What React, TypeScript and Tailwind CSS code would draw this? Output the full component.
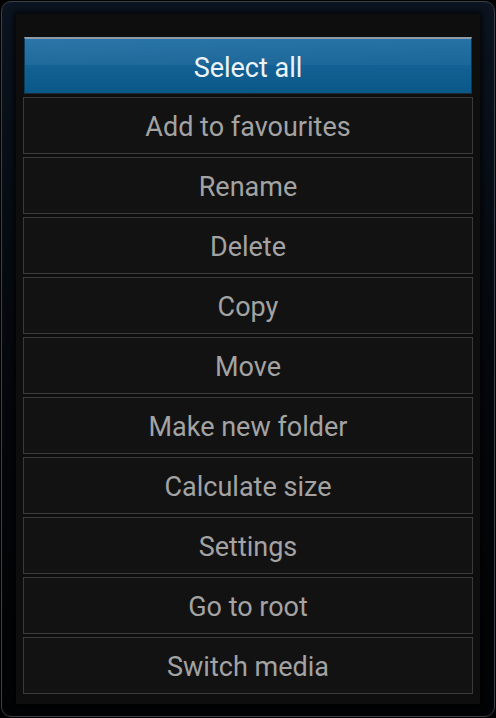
const items = [
  "Select all",
  "Add to favourites",
  "Rename",
  "Delete",
  "Copy",
  "Move",
  "Make new folder",
  "Calculate size",
  "Settings",
  "Go to root",
  "Switch media",
];

export default function App() {
  return (
    <div
      className="w-[496px] h-[718px] bg-black p-px"
      style={{ fontFamily: "Roboto, 'Liberation Sans', sans-serif" }}
    >
      {/* outer frame */}
      <div className="h-full rounded-[10px] border border-[#3a4048] bg-gradient-to-b from-[#0b1420] via-[#05080d] to-[#020304] px-[14px] pt-[12px] pb-[12px]">
        {/* inner panel */}
        <div className="h-[690px] bg-[#0e0e0e] shadow-[0_0_6px_2px_rgba(0,0,0,0.8)] px-[7px] pt-[23px] flex flex-col gap-[3px]">
          {items.map((label, i) =>
            i === 0 ? (
              <div
                key={label}
                className="relative h-[57px] flex items-center justify-center pt-[4px] border-t-2 border-t-[#8e9aa6] border-b border-b-[#1d2a36] border-x border-x-[#0a3a5c] bg-gradient-to-b from-[#1b6ba1] to-[#0a5888] mx-[1px] overflow-hidden"
              >
                <div className="absolute left-0 right-0 top-0 h-[26px] bg-[linear-gradient(175deg,rgba(255,255,255,0.07),rgba(255,255,255,0.03))]" />
                <span className="relative text-[27px] text-[#eef3f8]">{label}</span>
              </div>
            ) : (
              <div
                key={label}
                className="h-[57px] flex items-center justify-center pt-[4px] border border-[#3a3a3a] bg-[#121212]"
              >
                <span className="text-[27px] text-[#a3a3a3]">{label}</span>
              </div>
            )
          )}
        </div>
      </div>
    </div>
  );
}
